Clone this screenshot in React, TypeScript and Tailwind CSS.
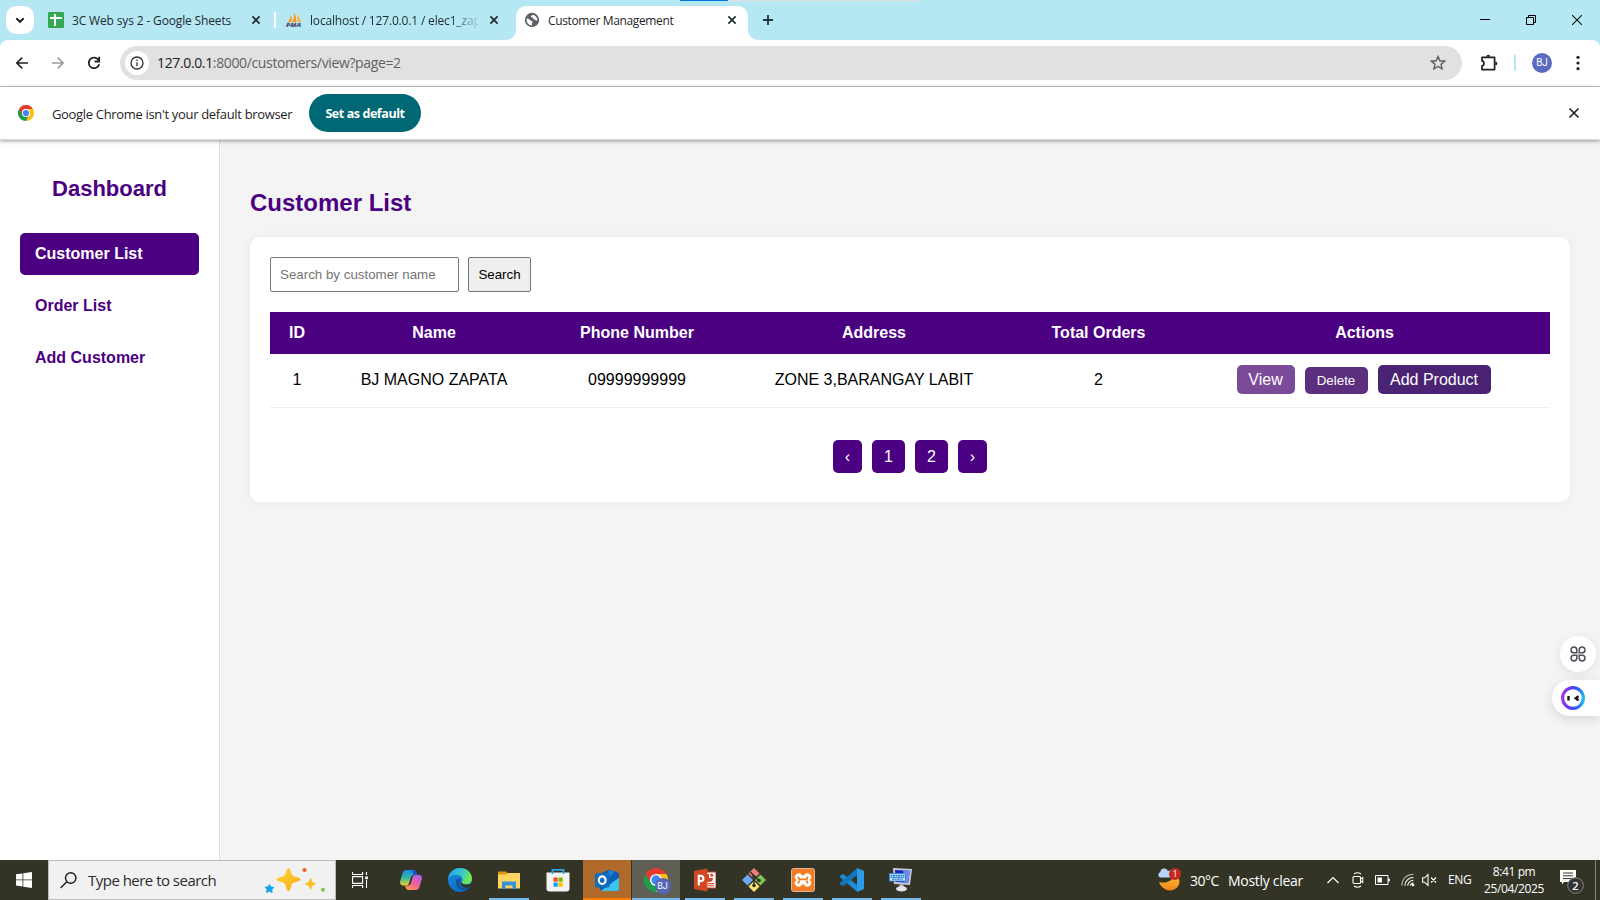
import React from "react";

const UI = "font-['Open_Sans','Noto_Sans',sans-serif]";

function TabClose() {
  return (
    <svg width="16" height="16" viewBox="0 0 16 16" className="shrink-0" fill="none" stroke="#1f2a2e" strokeWidth="1.7">
      <path d="M4.4 4.4l7.2 7.2M11.6 4.4l-7.2 7.2" />
    </svg>
  );
}

function SheetsIcon() {
  return (
    <svg width="16" height="16" viewBox="0 0 16 16" className="shrink-0">
      <rect width="16" height="16" rx="1.2" fill="#34a853" />
      <path d="M2 6h12M7 2v12" stroke="#fff" strokeWidth="2" />
    </svg>
  );
}

function PmaIcon() {
  return (
    <svg width="16" height="16" viewBox="0 0 16 16" className="shrink-0 overflow-visible">
      <path d="M1 10.2C3.600 8.500 4.600 5.500 4.500 2.500 6 5 6.200 7.600 5.400 10.200z" fill="#f9a13a" />
      <path d="M6 10.200C8.200 7 8.400 4 7.800.5c2.200 3 3 6.500 2 9.700z" fill="#f89c0e" />
      <path d="M10.800 10.200c.9-2.500.8-5-.2-7.700 2.400 1.700 4.200 4.500 4.600 7.700z" fill="#fbb45c" />
      <text x="0" y="15.200" fontSize="5.500" fontWeight="800" fontStyle="italic" fontFamily="Open Sans" fill="#4a4a78" textLength="15.200" lengthAdjust="spacingAndGlyphs">PMA</text>
    </svg>
  );
}

function GlobeIcon() {
  return (
    <svg width="16" height="16" viewBox="0 0 16 16" className="shrink-0">
      <circle cx="8" cy="8" r="7.200" fill="#5f6368" />
      <path d="M2.700 6.600c2 .2 3 1 3.700 1.900.4.600 1.700.4 2.200 1 .4.800-.6 1.200-.6 2.100v1.800c-3-.1-5.400-2.500-5.300-5.500zM8.800 2.700c-.7.900-1.900.9-1.900 1.900 0 .9 1.900.6 2.100 1.600.2.900 1.400.9 2.100 1.500.4.600 1.400.9 2.200.6C13.400 5.500 11.500 3.200 8.800 2.700z" fill="#fff" />
    </svg>
  );
}

function ChromeLogo({ size }: { size: number }) {
  return (
    <svg width={size} height={size} viewBox="0 0 48 48" className="shrink-0">
      <path d="M24 24L3.200 12A24 24 0 0 0 24 48L34.400 30z" fill="#1e9e4a" />
      <path d="M24 24V12H44.800A24 24 0 0 1 24 48L34.400 30z" fill="#fbc116" />
      <path d="M3.200 12A24 24 0 0 1 44.800 12H24A12 12 0 0 0 13.600 30z" fill="#e33b2e" />
      <circle cx="24" cy="24" r="12" fill="#fff" />
      <circle cx="24" cy="24" r="9.300" fill="#4285f4" />
    </svg>
  );
}

function TabStrip() {
  return (
    <div className="relative flex h-10 shrink-0 items-center bg-[#b5e8f3]">
      <div className="absolute left-[680px] top-0 flex h-px w-[241px]">
        <div className="w-12 bg-[#0078d7]" />
        <div className="flex-1 bg-[#dfdfdf]" />
      </div>
      <div className="ml-1.5 flex size-7 items-center justify-center rounded-[10px] bg-white">
        <svg width="10" height="10" viewBox="0 0 10 10" fill="none" stroke="#1f1f1f" strokeWidth="1.900"><path d="M1.300 3.200L5 6.800l3.700-3.600" /></svg>
      </div>
      <div className="ml-3.5 flex w-[216px] items-center">
        <SheetsIcon />
        <span className="ml-2 w-44 whitespace-nowrap pt-0.5 text-[12px] leading-4 tracking-[-0.15px] text-[#1d2b30]">3C Web sys 2 - Google Sheets</span>
        <TabClose />
      </div>
      <div className="ml-2.5 h-4 w-0.5 bg-white" />
      <div className="ml-[10px] flex w-[216px] items-center">
        <PmaIcon />
        <span className="ml-2 mr-2 w-[168px] whitespace-nowrap pt-0.5 text-[12px] leading-4 tracking-[-0.17px] text-[#1d2b30] [mask-image:linear-gradient(to_right,black_140px,transparent_172px)]">localhost / 127.0.0.1 / elec1_zap</span>
        <TabClose />
      </div>
      <div className="relative ml-[14px] mt-1.5 flex h-[34px] w-[232px] items-center rounded-t-[10px] bg-white pb-1.5 pl-2">
        <svg className="absolute -left-[10px] bottom-0" width="10" height="10"><path d="M0 10A10 10 0 0 0 10 0V10z" fill="#fff" /></svg>
        <svg className="absolute -right-[10px] bottom-0" width="10" height="10"><path d="M10 10A10 10 0 0 1 0 0V10z" fill="#fff" /></svg>
        <GlobeIcon />
        <span className="ml-2 w-44 whitespace-nowrap pt-0.5 text-[12px] leading-4 tracking-[-0.36px] text-[#1f1f1f]">Customer Management</span>
        <TabClose />
      </div>
      <svg className="ml-3 shrink-0" width="16" height="16" stroke="#20343a" strokeWidth="1.800"><path d="M8 3v10M3 8h10" /></svg>
      <div className="ml-auto flex items-center gap-9 pr-[18px]">
        <svg width="10" height="10" stroke="#000"><path d="M0 4.500h10" /></svg>
        <svg width="10" height="10" fill="none" stroke="#000"><path d="M.5 2.500h7v7h-7zM2.500 2.500v-2h7v7h-2" /></svg>
        <svg width="10" height="10" fill="none" stroke="#111" strokeWidth="1.100"><path d="M0 0l10 10M10 0L0 10" /></svg>
      </div>
    </div>
  );
}

function Toolbar() {
  return (
    <div className="shrink-0 bg-[#b5e8f3]">
      <div className="flex h-[47px] items-center rounded-t-lg border-b border-[#c7c9c9] bg-white">
        <svg className="ml-[14px]" width="16" height="16" fill="none" stroke="#202124" strokeWidth="1.600"><path d="M14 8H3M8.200 2.600L2.800 8l5.400 5.400" /></svg>
        <svg className="ml-5" width="16" height="16" fill="none" stroke="#9b9b9b" strokeWidth="1.600"><path d="M2 8h11M7.800 2.600L13.200 8l-5.400 5.400" /></svg>
        <svg className="ml-5" width="16" height="16" fill="none" stroke="#202124" strokeWidth="1.800"><path d="M12.700 5.300A5.300 5.300 0 1 0 13.200 9.200" /><path d="M13.200 1.700v4.800H8.600" /></svg>
        <div className="ml-[18px] flex h-[34px] w-[1342px] items-center rounded-full bg-[#e1e1e1] pl-[5px]">
          <div className="flex size-6 items-center justify-center rounded-full bg-white">
            <svg width="14" height="14" fill="none" stroke="#303134" strokeWidth="1.300"><circle cx="7" cy="7" r="6" /><path d="M7 6.200v4M7 3.500v1.500" /></svg>
          </div>
          <span className="ml-2 whitespace-nowrap text-[14px] leading-5 tracking-[-0.36px] text-[#5f6163]"><span className="text-[#202124]">127.0.0.1</span>:8000/customers/view?page=2</span>
          <svg className="ml-auto mr-4" width="16" height="16" viewBox="0 0 16 16" fill="none" stroke="#5b5b5b" strokeWidth="1.400"><path d="M8 1.500l1.900 4.300 4.700.4-3.600 3.100 1.100 4.600L8 11.500l-4.100 2.400L5 9.300 1.400 6.200l4.700-.4z" /></svg>
        </div>
        <svg className="ml-[18px]" width="18" height="18" viewBox="0 0 18 18" fill="none" stroke="#202124" strokeWidth="1.700"><path d="M2 3.300h12.600v12.300H2v-3.700c2.600-.3 2.600-4.600 0-5z" strokeLinejoin="round" /><path d="M6.300 2.700a2 2 0 0 1 4 0zM15.300 7.500a2 2 0 0 1 0 4z" fill="#202124" stroke="none" /></svg>
        <div className="ml-4 h-4 w-0.5 bg-[#b5e8f3]" />
        <div className="ml-4 flex size-5 items-center justify-center rounded-full bg-[#5c6bc0] font-[Roboto,sans-serif] text-[10px] leading-none text-white">BJ</div>
        <svg className="ml-[18px]" width="16" height="16" fill="#202124"><circle cx="8" cy="2.300" r="1.600" /><circle cx="8" cy="8" r="1.600" /><circle cx="8" cy="13.700" r="1.600" /></svg>
      </div>
    </div>
  );
}

function InfoBar() {
  return (
    <div className="relative z-10 flex h-[53px] shrink-0 items-center border-b border-[#d5dcda] bg-white pl-[18px] shadow-[0_1px_4px_rgba(0,0,0,0.4)]">
      <ChromeLogo size={16} />
      <span className="ml-[18px] w-[257px] whitespace-nowrap pt-px text-[13px] leading-4 tracking-[-0.33px] text-[#1f1f1f]">Google Chrome isn't your default browser</span>
      <div className="flex h-[38px] w-28 items-center justify-center whitespace-nowrap rounded-full bg-[#006874] pt-0.5 text-[12.500px] font-bold tracking-[-0.42px] text-white">Set as default</div>
      <svg className="ml-auto mr-[18px]" width="16" height="16" fill="none" stroke="#1f1f1f" strokeWidth="1.600"><path d="M3.500 3.500l9 9M12.500 3.500l-9 9" /></svg>
    </div>
  );
}

const navItems = [
  { label: "Customer List", active: true },
  { label: "Order List", active: false },
  { label: "Add Customer", active: false },
];

function Sidebar() {
  return (
    <aside className="w-[220px] shrink-0 border-r border-[#ddd] bg-white px-5 pt-9">
      <h2 className="mb-8 text-center text-[22px] font-bold leading-[25px] text-[#4b0082]">Dashboard</h2>
      <nav className="flex flex-col gap-2.5">
        {navItems.map((item) => (
          <a key={item.label} className={item.active ? "rounded-[5px] bg-[#4b0082] px-[15px] py-3 text-base font-bold leading-[18px] text-white" : "rounded-[5px] px-[15px] py-3 text-base font-bold leading-[18px] text-[#4b0082]"}>{item.label}</a>
        ))}
      </nav>
    </aside>
  );
}

function CustomerPage() {
  return (
    <main className="flex-1 bg-[#f4f4f4] px-[30px] pt-[49px]">
      <h2 className="mb-5 text-2xl font-bold leading-7 text-[#4b0082]">Customer List</h2>
      <section className="h-[265px] rounded-[10px] bg-white p-5 shadow-[0_0_10px_rgba(0,0,0,0.05)]">
        <form className="flex h-[35px] gap-[9px]">
          <input placeholder="Search by customer name" className="w-[189px] rounded-[2px] border border-[#767676] px-[9px] text-[13.333px] placeholder:text-[#757575]" />
          <button type="button" className="w-[63px] rounded-[2px] border border-[#767676] bg-[#efefef] text-[13.333px] text-black">Search</button>
        </form>
        <table className="mt-5 w-full table-fixed border-separate border-spacing-0 text-center text-base leading-[18px]">
          <colgroup>
            <col className="w-[54px]" /><col className="w-[220px]" /><col className="w-[186px]" /><col className="w-[288px]" /><col className="w-[161px]" /><col />
          </colgroup>
          <thead>
            <tr className="text-white">
              {["ID", "Name", "Phone Number", "Address", "Total Orders", "Actions"].map((h) => <th key={h} className="h-[42px] bg-[#4b0082] p-0 font-bold">{h}</th>)}
            </tr>
          </thead>
          <tbody className="text-black">
            <tr>
              {["1", "BJ MAGNO ZAPATA", "09999999999", "ZONE 3,BARANGAY LABIT", "2"].map((v) => <td key={v} className="h-[54px] border-b border-[#eee] p-0 pb-0.5">{v}</td>)}
              <td className="h-[54px] border-b border-[#eee] p-0 pt-[11px] align-top">
                <div className="flex items-end justify-center gap-2.5 pr-0.5 text-white">
                  <a className="h-[29px] w-[58px] rounded-[5px] bg-[#7b4b9a] leading-[29px]">View</a>
                  <button className="h-[27px] w-[63px] rounded-[5px] bg-[#5b2f7e] text-[13.333px]">Delete</button>
                  <a className="h-[29px] w-[113px] whitespace-nowrap rounded-[5px] bg-[#4b2374] leading-[29px]">Add Product</a>
                </div>
              </td>
            </tr>
          </tbody>
        </table>
        <div className="mt-8 flex justify-center gap-2.5 text-base text-white">
          <a className="h-[33px] w-[29px] rounded-[5px] bg-[#4b0082] text-center leading-[33px]">‹</a>
          <a className="h-[33px] w-[33px] rounded-[5px] bg-[#4b0082] text-center leading-[33px]">1</a>
          <a className="h-[33px] w-[33px] rounded-[5px] bg-[#4b0082] text-center leading-[33px]">2</a>
          <a className="h-[33px] w-[29px] rounded-[5px] bg-[#4b0082] text-center leading-[33px]">›</a>
        </div>
      </section>
    </main>
  );
}

function FloatingTools() {
  return (
    <div className="absolute right-0 top-[636px] z-20 flex flex-col items-end gap-2">
      <div className="mr-1 flex size-9 items-center justify-center rounded-full bg-white shadow-[0_2px_10px_rgba(0,0,0,0.08)]">
        <svg width="16" height="16" fill="none" stroke="#504e59" strokeWidth="1.500">
          <path d="M6.800 6.800H3.900A2.900 2.900 0 1 1 6.800 3.900zM9.200 6.800V3.900a2.900 2.900 0 1 1 2.900 2.900zM6.800 9.200v2.900a2.900 2.900 0 1 1-2.900-2.900zM9.200 9.200h2.900a2.900 2.900 0 1 1-2.900 2.900z" />
        </svg>
      </div>
      <div className="flex h-9 w-12 items-center rounded-l-full bg-white pl-[9px] shadow-[0_3px_12px_rgba(0,0,0,0.12)]">
        <svg width="24" height="24">
          <defs><linearGradient id="ring" x1="0" y1=".6" x2="1" y2=".7"><stop offset="0" stopColor="#a136e8" /><stop offset=".45" stopColor="#4a3ff2" /><stop offset=".75" stopColor="#356af5" /><stop offset="1" stopColor="#20bdf0" /></linearGradient></defs>
          <circle cx="12" cy="12" r="10.400" fill="#fff" stroke="url(#ring)" strokeWidth="3.200" />
          <path d="M7.500 10v4.500M17.500 10.200l-2.800 2 2.800 2.200" fill="none" stroke="#111" strokeWidth="2.400" />
        </svg>
      </div>
    </div>
  );
}

function SearchSparkles() {
  return (
    <svg width="64" height="28" viewBox="0 0 64 28" className="ml-auto mr-2">
      <defs><linearGradient id="gold" x1="0" y1="0" x2="1" y2="1"><stop offset="0" stopColor="#ffd633" /><stop offset="1" stopColor="#fba91a" /></linearGradient></defs>
      <path d="M25.500 2c2 0 2.700 6.200 4 7.500s8 2 8 4-6.700 2.700-8 4-2 7.800-4 7.800-2.700-6.500-4-7.800-8-2-8-4 6.700-2.700 8-4 2-7.500 4-7.500z" fill="url(#gold)" />
      <path d="M47.500 12c1 0 1.200 3.200 1.900 3.900s3.700.9 3.700 1.900-3 1.200-3.700 1.900-.9 3.700-1.900 3.700-1.200-3-1.900-3.700-3.700-.9-3.700-1.900 3-1.200 3.700-1.900 .9-3.900 1.900-3.900z" fill="#fcbd25" />
      <path d="M6.500 18.500l1.300 2.500 3 .5-2 2 .3 3-2.700-1.200-2.900 1 .6-2.900-2-2.100 2.900-.4z" fill="#12a5ea" stroke="#12a5ea" strokeLinejoin="round" />
      <circle cx="41.500" cy="4" r="2.100" fill="#f25f22" />
      <circle cx="60" cy="23.700" r="2" fill="#86c440" />
    </svg>
  );
}

function EdgeIcon() {
  return (
    <svg width="24" height="24" viewBox="0 0 24 24">
      <defs>
        <linearGradient id="e1" x1="0" y1="0" x2="1" y2=".3"><stop offset="0" stopColor="#259ee8" /><stop offset=".6" stopColor="#37c6d2" /><stop offset="1" stopColor="#72e84c" /></linearGradient>
        <linearGradient id="e2" x1="0" y1="0" x2=".7" y2="1"><stop offset="0" stopColor="#158fdf" /><stop offset="1" stopColor="#1266bf" /></linearGradient>
      </defs>
      <circle cx="12" cy="12" r="12" fill="url(#e2)" />
      <path d="M.1 11C.6 4.800 5.600 0 12 0c6.800 0 12 4.800 12 10.500 0 3.500-2.500 5.800-6 5.800-2.800 0-4.400-1-4.400-2 0-.6.900-1.200.9-2.500C14.500 9 12 7 8.500 7 4 7 1 9 .1 11z" fill="url(#e1)" />
      <path d="M8.500 11.500c-1.800 5 1.700 10 7.200 10.300 2.300.1 4.300-.8 5.800-2.200-5.500 2-10-.3-10.200-4.300 0-1.500.5-2.800 1.600-3.300-1-1.600-3.400-1.800-4.400-.5z" fill="#124f99" />
      <path d="M13.700 13.700c-.5 2.800 4.500 4 9.200 2.300l1.100 0-2.900 3.500c-4.300 1.300-8.600-1-8.600-4.400 0-.6.500-1.100 1.200-1.400z" fill="#333426" />
    </svg>
  );
}

function TaskIcon({ name }: { name: string }) {
  switch (name) {
    case "task view":
      return (
        <svg width="16" height="16" fill="none" stroke="#fff" strokeWidth="1.100"><path d="M.6 0v2.500h10V0M.6 16v-2.500h10V16M.6 4.600h10v6.800H.6zM14.500 0v3M14.500 8v8" /><path d="M13.200 4.500h2.700v2.700h-2.700z" fill="#fff" stroke="none" /></svg>
      );
    case "copilot":
      return (
        <svg width="22" height="20" viewBox="0 0 22 20">
          <defs>
            <linearGradient id="c1" x1="0" y1="0" x2="0" y2="1"><stop offset="0" stopColor="#1b8af0" /><stop offset=".5" stopColor="#31b6a3" /><stop offset="1" stopColor="#f1d22c" /></linearGradient>
            <linearGradient id="c2" x1=".7" y1="0" x2=".2" y2="1"><stop offset="0" stopColor="#b45be8" /><stop offset=".5" stopColor="#f0609c" /><stop offset="1" stopColor="#fb9b45" /></linearGradient>
          </defs>
          <path d="M6.500 0h7c2 0 2.700 1.500 3.200 3.200L17.200 5h-3c-2 0-2.700.7-3.300 2.600l-1.700 5.200C8.500 15 7.600 15.500 5.500 15.500H3C.5 15.500-.3 13.500.2 11L2.500 3.300C3.200 1 4.300 0 6.500 0z" fill="url(#c1)" />
          <path d="M13 0h.8c1.800 0 2.500 1.500 3 3.200l.5 1.800h-3.500l-1.400-3.500z" fill="#1555c9" />
          <path d="M15.500 20h-7c-2 0-2.700-1.500-3.200-3.200L4.900 15.500h2.600c2 0 2.900-.8 3.500-2.700l1.600-5.200c.7-2 1.500-2.600 3.500-2.600h3c2.500 0 3.200 2 2.700 4.200l-2.300 7.500C18.800 19 17.700 20 15.500 20z" fill="url(#c2)" />
        </svg>
      );
    case "edge":
      return <EdgeIcon />;
    case "explorer":
      return (
        <svg width="22" height="20" viewBox="0 0 22 20"><path d="M0 1.500h8l1.500 1.500H20v14H0z" fill="#d99a09" /><path d="M0 4.500h8.500l1.500-1.500h12v15.500H0z" fill="#fcd462" /><path d="M4 19v-7.500h14V19h-3.500v-3.500h-7V19z" fill="#3b8fd8" /></svg>
      );
    case "store":
      return (
        <svg width="24" height="24" viewBox="0 0 24 24"><path d="M6.500 6V1.800h11V6" fill="none" stroke="#28a8ea" strokeWidth="1.800" /><path d="M.5 4.500h23v16a3 3 0 0 1-3 3h-17a3 3 0 0 1-3-3z" fill="#f3f3f3" /><path d="M6.500 6V4M17.500 6V4" stroke="#28a8ea" strokeWidth="1.800" /><path d="M7.500 9.500h4.200v4.200H7.500z" fill="#f25022" /><path d="M12.500 9.500h4.200v4.200h-4.200z" fill="#7fba00" /><path d="M7.500 14.500h4.200v4.200H7.500z" fill="#00a4ef" /><path d="M12.500 14.500h4.200v4.200h-4.200z" fill="#ffb900" /></svg>
      );
    case "outlook":
      return (
        <svg width="24" height="24" viewBox="0 0 24 24"><path d="M5 6l9-4.500L24 6v14.500a2.500 2.500 0 0 1-2.500 2.500H8a3 3 0 0 1-3-3z" fill="#0d5bb0" /><path d="M13 2l8 1.500L17 14l-5-2z" fill="#1b7ed6" /><path d="M24 9.500v11a2.500 2.500 0 0 1-2.500 2.500H6z" fill="#39c5f0" /><path d="M20 3l4 2.500v4L14 16l-.5-5z" fill="#0f5cb5" /><rect y="5" width="14.500" height="14.500" rx="1.500" fill="#0f6cbd" /><ellipse cx="7.200" cy="12.200" rx="3.400" ry="3.800" fill="none" stroke="#fff" strokeWidth="2.100" /></svg>
      );
    case "chrome":
      return (
        <div className="relative size-6"><ChromeLogo size={24} /><span className="absolute left-[10.500px] top-[10px] flex size-[16px] items-center justify-center rounded-full bg-[#5566b5] font-[Roboto,sans-serif] text-[9px] leading-none text-white">BJ</span></div>
      );
    case "powerpoint":
      return (
        <svg width="22" height="24" viewBox="0 0 22 24"><path d="M11 4h11v16H11z" fill="#fff" stroke="#d24726" /><path d="M15 6a4 4 0 1 0 4 4h-4z" fill="#d24726" /><path d="M16.500 5.500v3h3a3 3 0 0 0-3-3zM14 15h6v1.200h-6zM14 17.300h6v1h-6z" fill="#d24726" /><path d="M0 3l13.500-2.500v23L0 21z" fill="#d24726" /><path d="M4.800 17.500V7.800h1.700c2.200 0 2.900 1.100 2.900 2.600 0 1.700-1.100 2.700-3.100 2.700H5" fill="none" stroke="#fff" strokeWidth="2.100" /></svg>
      );
    case "git":
      return (
        <svg width="24" height="24" viewBox="0 0 24 24"><path d="M12 0l5.500 5.500L12 11 6.500 5.500z" fill="#f07c7c" /><path d="M5.500 6.500L11 12l-5.500 5.500L0 12z" fill="#6fa8f5" /><path d="M18.500 6.500L24 12l-5.500 5.500L13 12z" fill="#7cc556" /><path d="M12 13l5.500 5.500L12 24l-5.500-5.500z" fill="#ffe27a" /><path d="M8.500 4l3.500 4v10M12 8l5 4.500" stroke="#333426" strokeWidth="1.500" fill="none" /><circle cx="12" cy="8.500" r="1.700" fill="#333426" /><circle cx="12" cy="17.500" r="1.800" fill="#333426" /><circle cx="17" cy="12.500" r="1.800" fill="#333426" /></svg>
      );
    case "xampp":
      return (
        <svg width="24" height="24" viewBox="0 0 24 24"><rect x=".5" y=".5" width="23" height="23" rx="2" fill="#f47b20" stroke="#d9b79a" /><path d="M12 9.500C11.300 7 10 5.800 7.800 5.800 5.500 5.800 4.200 7.200 4.200 9c0 1.300.6 2.300 1.600 3-1 .7-1.600 1.700-1.600 3 0 1.900 1.300 3.300 3.400 3.300s3.700-1.500 4.400-3.800c.7 2.300 2.300 3.800 4.400 3.800s3.400-1.400 3.400-3.300c0-1.300-.6-2.300-1.600-3 1-.7 1.600-1.700 1.600-3 0-1.800-1.300-3.200-3.600-3.200-2.200 0-3.500 1.200-4.200 3.700z" fill="#fff" stroke="#fff" /><path d="M7.500 8.500v1.200c0 1 .7 1.500 1.500 1.700h6c.8-.2 1.500-.7 1.500-1.700V8.500M7.500 15.700v-1.200c0-1 .7-1.400 1.500-1.400M16.500 15.700v-1.200c0-1-.7-1.400-1.500-1.400" fill="none" stroke="#f47b20" strokeWidth="1.700" /></svg>
      );
    case "vscode":
      return (
        <svg width="24" height="24" viewBox="0 0 24 24"><path d="M17.500 24v-6.800L3.200 6.100 0 7.700v1.500z" fill="#1b8bd4" /><path d="M17.500 0v6.800L3.200 17.900 0 16.300v-1.500z" fill="#1277bd" /><path d="M17 0L24 3v18l-7 3z" fill="#2b9cea" /></svg>
      );
    default:
      return (
        <svg width="24" height="24" viewBox="0 0 24 24"><path d="M4 0l19 1-2 16-16-1z" fill="#c9ccd4" /><path d="M6 2l15 .8-1.700 12L6.500 14z" fill="#1424c8" /><path d="M14 2.400l7 .4-1.700 12-4-.4z" fill="#6f8cf0" /><path d="M10.500 16.500h4V20h-4z" fill="#bfc3ca" /><ellipse cx="12.500" cy="20.800" rx="5.500" ry="2.700" fill="#e2e4e8" /><path d="M.5 5.500h16v7.500H.5z" fill="#d0eafb" stroke="#3b87cf" /><path d="M1.500 7.500h14M1.500 9.300h14M3 11.200h11" stroke="#2577cc" strokeWidth="1.300" strokeDasharray="2 .5" /></svg>
      );
  }
}

const apps = [
  { name: "edge", open: false },
  { name: "explorer", open: true },
  { name: "store", open: false },
  { name: "outlook", open: false },
  { name: "chrome", open: false },
  { name: "powerpoint", open: true },
  { name: "git", open: true },
  { name: "xampp", open: true },
  { name: "vscode", open: true },
  { name: "control", open: true },
];

function appClass(name: string) {
  if (name === "outlook") return "relative flex h-10 w-12 items-center justify-center border-b-2 border-[#ff7a00] bg-[#ae692b] pt-0.5";
  if (name === "chrome") return "relative flex h-10 w-12 items-center justify-center border-b-2 border-[#76b9ed] bg-[#5f5f55] pt-0.5";
  return "relative flex h-10 w-12 items-center justify-center";
}

function Taskbar() {
  return (
    <footer className="flex h-10 shrink-0 items-center bg-[#333426] text-white">
      <div className="flex w-12 shrink-0 justify-center">
        <svg width="16" height="16" fill="#fff"><path d="M0 2.300L6.500 1.400v6.100H0zM7.300 1.300L16 0v7.500H7.300zM0 8.300h6.500v6.200L0 13.600zM7.300 8.300H16V16l-8.700-1.300z" /></svg>
      </div>
      <div className="flex h-10 w-72 shrink-0 items-center border border-[#bcbcbc] bg-[#f1f1f1] pl-[11px]">
        <svg width="17" height="17" fill="none" stroke="#1c1c1c" strokeWidth="1.400"><circle cx="10.700" cy="6" r="5.200" /><path d="M6.800 9.800L.6 16" /></svg>
        <span className="ml-[11px] whitespace-nowrap text-[15px] leading-5 tracking-[-0.52px] text-[#2b2b2b]">Type here to search</span>
        <SearchSparkles />
      </div>
      <div className="flex w-12 justify-center"><TaskIcon name="task view" /></div>
      <div className="flex w-[51px] justify-center pl-[3px]"><TaskIcon name="copilot" /></div>
      <div className="flex gap-px pl-px">
        {apps.map((a) => (
          <div key={a.name} className={appClass(a.name)}>
            <TaskIcon name={a.name} />
            {a.open && <span className="absolute bottom-0 left-1 h-0.5 w-10 bg-[#76b9ed]" />}
          </div>
        ))}
      </div>
      <div className="ml-auto flex h-10 shrink-0 items-center">
        <svg width="24" height="24" viewBox="0 0 24 24"><defs><linearGradient id="moon" x1="0" y1="0" x2="0" y2="1"><stop offset="0" stopColor="#ffc23c" /><stop offset="1" stopColor="#f08416" /></linearGradient></defs><path d="M2 14c7 2 14-1 15.500-8 4 1.500 6 6 4.500 10.500C19 24.500 6 25 2 14z" fill="url(#moon)" /><path d="M3 9.500a3 3 0 0 1 .3-5.500A4 4 0 0 1 11 3a3.300 3.300 0 0 1 3 6.500z" fill="#b9d3f7" /><circle cx="18" cy="6" r="6" fill="#c42b1c" /><text x="18" y="9.200" fontSize="9" fontFamily="Open Sans" textAnchor="middle" fill="#fff">1</text></svg>
        <span className="ml-[9px] w-[38px] whitespace-nowrap text-[14px] tracking-[-0.5px]">30°C</span>
        <span className="w-[99px] whitespace-nowrap text-[14px] tracking-[-0.3px]">Mostly clear</span>
        <svg width="12" height="8" fill="none" stroke="#fff" strokeWidth="1.200"><path d="M.5 7L6 1.500 11.500 7" /></svg>
        <svg className="ml-[13px]" width="12" height="16" fill="none" stroke="#fff" strokeWidth="1.100"><path d="M2 2Q5.500-.5 9 2M2 14q3.500 2.500 7 0" /><rect x="1" y="4.500" width="7.500" height="7" rx="1" /><path d="M8.500 7l2.200-1.500v5L8.500 9" /></svg>
        <svg className="ml-[11px]" width="15" height="12"><path d="M.5 1.500h12.500v9H.5z" fill="none" stroke="#fff" /><path d="M2.500 3.500h4.500v5H2.500zM13.200 4.500h1.600v3h-1.600z" fill="#fff" /></svg>
        <svg className="ml-[11px]" width="14" height="14" fill="none" stroke="#fff" strokeWidth="1.100"><path d="M.8 12.500C1 6 6 1.300 12.500 1.300" opacity=".65" /><path d="M3.800 12.700c.2-4.700 3.800-8.200 8.700-8.200M6.700 12.700c.1-3 2.600-5.400 5.800-5.400" /><path d="M9.500 12.800a3 3 0 0 1 3-2.800" /><circle cx="12" cy="12" r=".8" fill="#fff" /></svg>
        <svg className="ml-[7px]" width="15" height="14" fill="none" stroke="#fff" strokeWidth="1.100"><path d="M.6 4.800h2L6 1.500v11L2.600 9.200h-2zM9 4.500l5 5M14 4.500l-5 5" /></svg>
        <span className="ml-[11px] w-[24px] whitespace-nowrap text-[12px] tracking-[-0.4px]">ENG</span>
        <div className="ml-[12px] w-[60px] whitespace-nowrap text-center text-[12px] leading-[17px] tracking-[-0.38px]"><div>8:41 pm</div><div>25/04/2025</div></div>
        <svg className="ml-[15px]" width="26" height="30"><path d="M1 5h16v12H5l-2 2.500V17H1z" fill="#fff" /><path d="M4 8h10M4 10.800h10M4 13.600h10" stroke="#333426" /><circle cx="16.500" cy="20.500" r="7.800" fill="#333436" stroke="#85857d" /><text x="16.500" y="24.500" fontSize="11" fontWeight="600" fontFamily="Open Sans" textAnchor="middle" fill="#fff">2</text></svg>
        <div className="ml-[10px] mr-1 h-10 w-px bg-[#85857d]" />
      </div>
    </footer>
  );
}

export default function App() {
  return (
    <div className={`relative flex h-[900px] w-[1600px] flex-col overflow-hidden ${UI}`}>
      <TabStrip />
      <Toolbar />
      <InfoBar />
      <div className="flex min-h-0 flex-1 font-['Liberation_Sans',Arial,sans-serif]">
        <Sidebar />
        <CustomerPage />
      </div>
      <FloatingTools />
      <Taskbar />
    </div>
  );
}
